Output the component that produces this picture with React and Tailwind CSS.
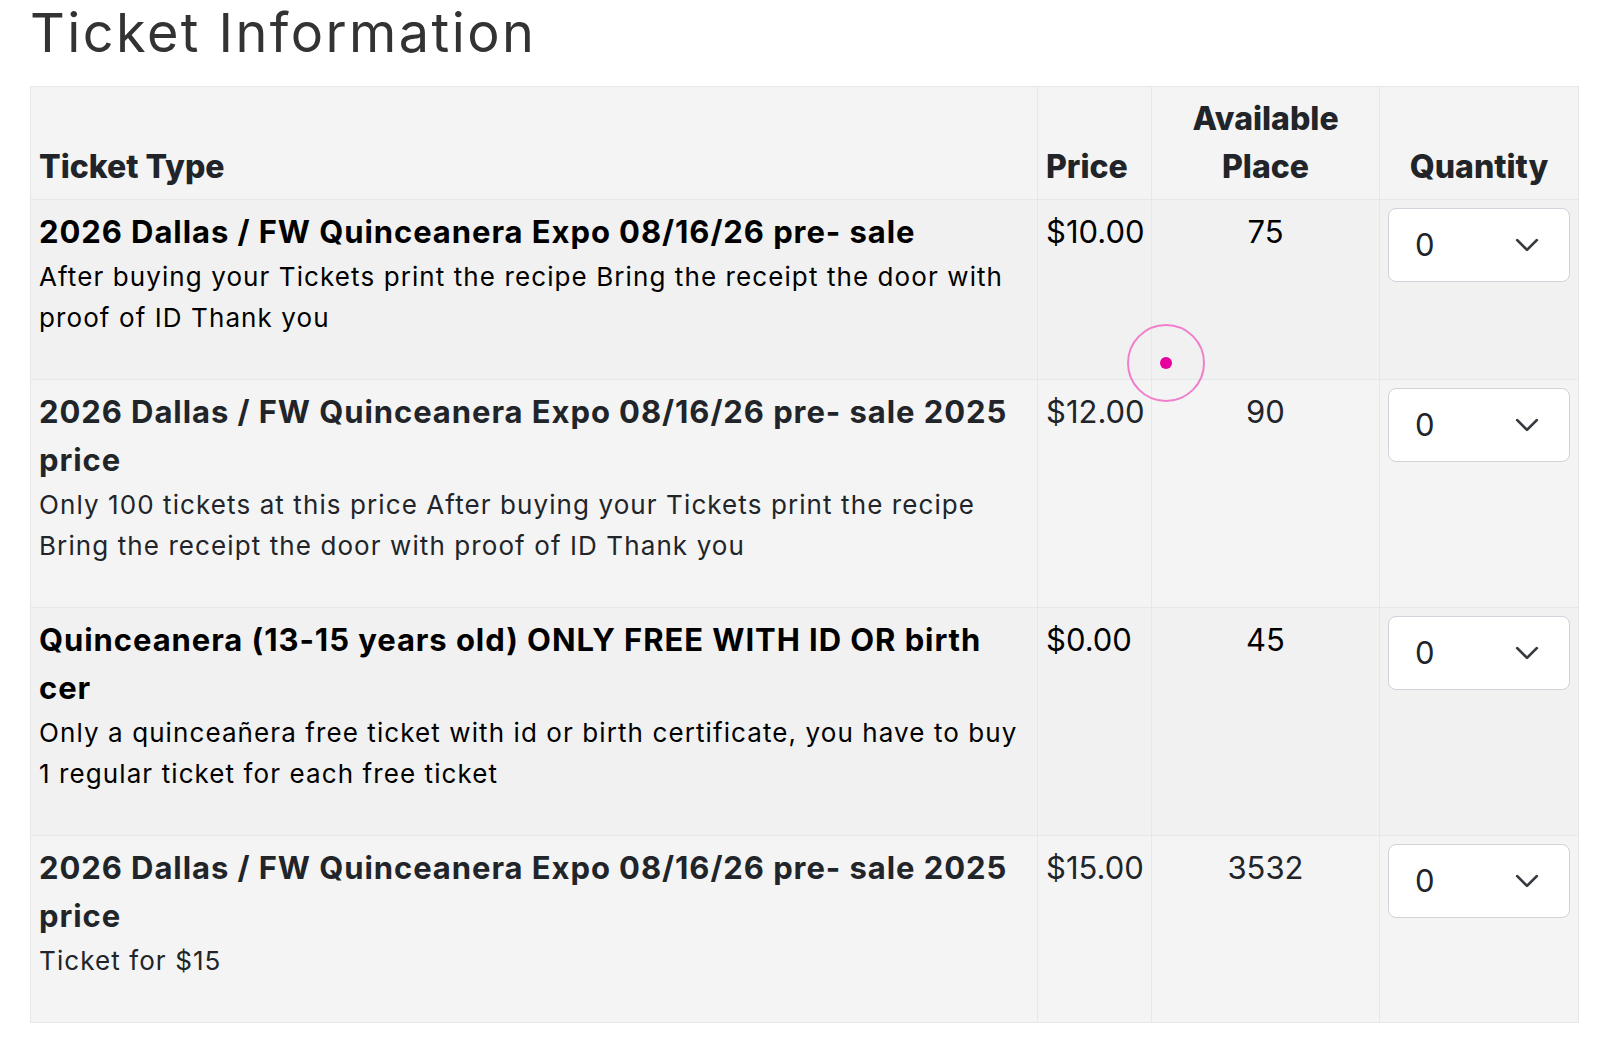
import { useState } from "react";

const tickets = [
  {
    id: 1,
    name: "2026 Dallas / FW Quinceanera Expo 08/16/26 pre- sale",
    description: [
      "After buying your Tickets print the recipe Bring the receipt the door with",
      "proof of ID Thank you",
    ],
    price: "$10.00",
    available: 75,
  },
  {
    id: 2,
    name: "2026 Dallas / FW Quinceanera Expo 08/16/26 pre- sale 2025 price",
    description: [
      "Only 100 tickets at this price After buying your Tickets print the recipe",
      "Bring the receipt the door with proof of ID Thank you",
    ],
    price: "$12.00",
    available: 90,
  },
  {
    id: 3,
    name: "Quinceanera (13-15 years old) ONLY FREE WITH ID OR birth cer",
    description: [
      "Only a quinceañera free ticket with id or birth certificate, you have to buy",
      "1 regular ticket for each free ticket",
    ],
    price: "$0.00",
    available: 45,
  },
  {
    id: 4,
    name: "2026 Dallas / FW Quinceanera Expo 08/16/26 pre- sale 2025 price",
    description: ["Ticket for $15"],
    price: "$15.00",
    available: 3532,
  },
];

function QuantitySelect({ value, onChange }) {
  return (
    <div className="relative">
      <select
        value={value}
        onChange={(e) => onChange(Number(e.target.value))}
        className="w-full h-[74px] appearance-none bg-white border border-[#ced4da] rounded-[8px] pl-[26px] pr-12 text-[31px] text-[#212529] outline-none"
      >
        {[0, 1, 2, 3, 4, 5, 6, 7, 8, 9, 10].map((n) => (
          <option key={n} value={n}>
            {n}
          </option>
        ))}
      </select>
      <svg
        viewBox="0 0 16 16"
        className="pointer-events-none absolute right-[30px] top-1/2 -translate-y-1/2 w-[26px] h-[26px]"
        fill="none"
        stroke="#343a40"
        strokeWidth="1.7"
        strokeLinecap="round"
        strokeLinejoin="round"
      >
        <path d="m2 5 6 6 6-6" />
      </svg>
    </div>
  );
}

export default function App() {
  const [quantities, setQuantities] = useState({});

  return (
    <div className="relative min-h-screen bg-white pl-[30px] font-['Inter',sans-serif]">
      <h1 className="text-[54px] leading-[66px] font-normal tracking-[0.045em] text-[#333] mb-[20px]">
        Ticket Information
      </h1>

      <table className="w-[1548px] table-fixed border-collapse border border-[#e5e8eb]">
        <thead>
          <tr className="bg-[#f4f4f4] text-[#212529]">
            <th className="w-[1007px] border border-[#e5e8eb] p-2 align-bottom text-left text-[32px] leading-[48px] font-extrabold">
              Ticket Type
            </th>
            <th className="w-[114px] border border-[#e5e8eb] p-2 align-bottom text-left text-[32px] leading-[48px] font-extrabold">
              Price
            </th>
            <th className="w-[228px] border border-[#e5e8eb] p-2 align-bottom text-center text-[32px] leading-[48px] font-extrabold">
              Available Place
            </th>
            <th className="w-[199px] border border-[#e5e8eb] p-2 align-bottom text-center text-[32px] leading-[48px] font-extrabold">
              Quantity
            </th>
          </tr>
        </thead>
        <tbody>
          {tickets.map((t, idx) => (
            <tr
              key={t.id}
              className={
                idx % 2 === 0
                  ? "bg-[#f1f1f1] text-black"
                  : "bg-[#f4f4f4] text-[#212529]"
              }
            >
              <td className="border border-[#e5e8eb] p-2 align-top">
                <div className="text-[31px] leading-[48px] font-bold tracking-[0.03em]">
                  {t.name}
                </div>
                <p className="text-[26px] leading-[41px] tracking-[0.042em] mb-[33px]">
                  {t.description.map((line, i) => (
                    <span key={i} className="block whitespace-nowrap">
                      {line}
                    </span>
                  ))}
                </p>
              </td>
              <td className="border border-[#e5e8eb] p-2 align-top text-[31px] leading-[48px]">
                {t.price}
              </td>
              <td className="border border-[#e5e8eb] p-2 align-top text-center text-[31px] leading-[48px]">
                {t.available}
              </td>
              <td className="border border-[#e5e8eb] p-2 align-top">
                <QuantitySelect
                  value={quantities[t.id] ?? 0}
                  onChange={(v) => setQuantities({ ...quantities, [t.id]: v })}
                />
              </td>
            </tr>
          ))}
        </tbody>
      </table>

      {/* click indicator */}
      <div className="pointer-events-none absolute left-[1127px] top-[324px] w-[78px] h-[78px] rounded-full border-2 border-[#f07fcb] flex items-center justify-center">
        <div className="w-[12px] h-[12px] rounded-full bg-[#e8009e]" />
      </div>
    </div>
  );
}
